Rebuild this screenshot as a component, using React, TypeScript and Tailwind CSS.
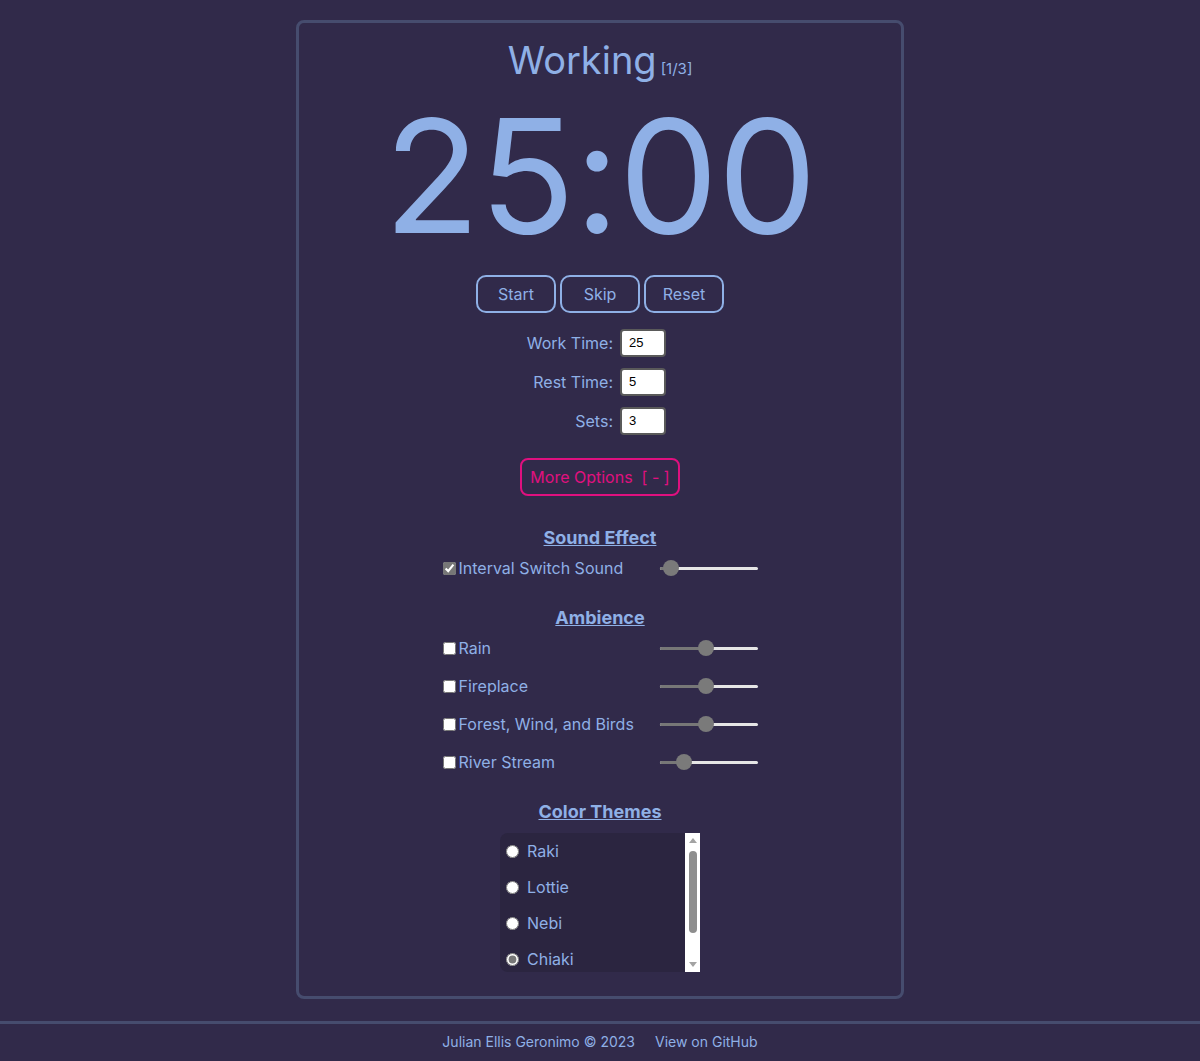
import React from "react";

const font = { fontFamily: "Inter, 'Noto Sans', sans-serif" };

function Slider({ pos }: { pos: number }) {
  return (
    <div className="relative w-[98px] h-4 flex items-center">
      <div className="absolute left-0 right-0 h-[3px] bg-[#e6e6e6] rounded" />
      <div className="absolute left-0 h-[3px] bg-[#777777] rounded" style={{ width: pos }} />
      <div
        className="absolute w-4 h-4 rounded-full bg-[#7a7a7a]"
        style={{ left: pos - 8 }}
      />
    </div>
  );
}

function Row({ label, checked, pos }: { label: string; checked?: boolean; pos: number }) {
  return (
    <div className="flex items-center justify-between w-[315px] h-[38px]">
      <label className="flex items-center text-[16px] text-[#8fb0e6]">
        <input
          type="checkbox"
          defaultChecked={checked}
          className="w-[13px] h-[13px] m-0 mr-[3px] accent-[#777777]"
        />
        {label}
      </label>
      <Slider pos={pos} />
    </div>
  );
}

function Field({ label, value }: { label: string; value: string }) {
  return (
    <div className="flex items-center h-[39px] w-[200px]">
      <span className="w-[113px] text-right text-[16px] text-[#8fb0e6]">{label}</span>
      <input
        defaultValue={value}
        className="ml-[7px] w-[46px] h-[28px] bg-white border-2 border-[#5a5a5a] rounded-[4px] pl-[7px] text-[13px] text-black outline-none"
        style={{ fontFamily: "Arial, 'Liberation Sans', sans-serif" }}
      />
      <span className="w-[34px]" />
    </div>
  );
}

function FakeScrollbar() {
  return (
    <div className="w-[15px] h-full bg-white flex flex-col items-center">
      <div className="h-[15px] flex items-center justify-center">
        <svg width="8" height="5" viewBox="0 0 8 5"><path d="M0 5 L4 0 L8 5 Z" fill="#a3a3a3" /></svg>
      </div>
      <div className="w-[8px] h-[82px] mt-[3px] rounded-full bg-[#8e8e8e]" />
      <div className="flex-1" />
      <div className="h-[15px] flex items-center justify-center">
        <svg width="8" height="5" viewBox="0 0 8 5"><path d="M0 0 L4 5 L8 0 Z" fill="#a3a3a3" /></svg>
      </div>
    </div>
  );
}

export default function App() {
  const themes = ["Raki", "Lottie", "Nebi", "Chiaki"];
  return (
    <div className="min-h-[1061px] bg-[#312a4a] flex flex-col" style={font}>
      <div className="mx-auto mt-5 w-[608px] h-[979px] border-[3px] border-[#464c6e] rounded-lg flex flex-col items-center">
        <div className="mt-[19px] h-[36px] flex items-baseline text-[#8fb0e6]">
          <span className="text-[38px] leading-[36px]">Working</span>
          <span className="text-[15px] leading-[18px] ml-1">[1/3]</span>
        </div>
        <div className="mt-[3px] text-[158px] leading-[190px] text-[#8fb0e6] tracking-[-1px]">25:00</div>
        <div className="flex gap-1 mt-[4px]">
          {["Start", "Skip", "Reset"].map((b) => (
            <button
              key={b}
              className="w-[80px] h-[38px] border-2 border-[#8fb0e6] rounded-[10px] text-[16px] text-[#8fb0e6]"
            >
              {b}
            </button>
          ))}
        </div>
        <div className="mt-[10px] flex flex-col items-center">
          <Field label="Work Time:" value="25" />
          <Field label="Rest Time:" value="5" />
          <Field label="Sets:" value="3" />
        </div>
        <button className="mt-[18px] w-[160px] h-[38px] border-2 border-[#e0107f] rounded-lg text-[16px] text-[#e0107f]">
          More Options&nbsp; [ - ]
        </button>
        <div className="mt-[28px] text-[18px] font-bold underline text-[#8fb0e6]">Sound Effect</div>
        <div className="-mt-[2px]">
          <Row label="Interval Switch Sound" checked pos={11} />
        </div>
        <div className="mt-[17px] text-[18px] font-bold underline text-[#8fb0e6]">Ambience</div>
        <div className="-mt-[2px] flex flex-col">
          <Row label="Rain" pos={46} />
          <Row label="Fireplace" pos={46} />
          <Row label="Forest, Wind, and Birds" pos={46} />
          <Row label="River Stream" pos={24} />
        </div>
        <div className="mt-[17px] text-[18px] font-bold underline text-[#8fb0e6]">Color Themes</div>
        <div className="mt-[8px] w-[200px] h-[139px] bg-[#2b2540] rounded-l-lg overflow-hidden flex">
          <div className="flex-1 flex flex-col">
            {themes.map((t) => (
              <label key={t} className="flex items-center shrink-0 h-[36px] pl-[6px] text-[16px] text-[#8fb0e6]">
                <input
                  type="radio"
                  name="theme"
                  defaultChecked={t === "Chiaki"}
                  className="w-[13px] h-[13px] m-0 mr-[8px] accent-[#777777]"
                />
                {t}
              </label>
            ))}
          </div>
          <FakeScrollbar />
        </div>
      </div>
      <div className="mt-[22px] border-t-[3px] border-[#464c6e] h-[38px] flex items-center justify-center gap-5 text-[14px] text-[#8fb0e6]">
        <span>Julian Ellis Geronimo © 2023</span>
        <span>View on GitHub</span>
      </div>
    </div>
  );
}
